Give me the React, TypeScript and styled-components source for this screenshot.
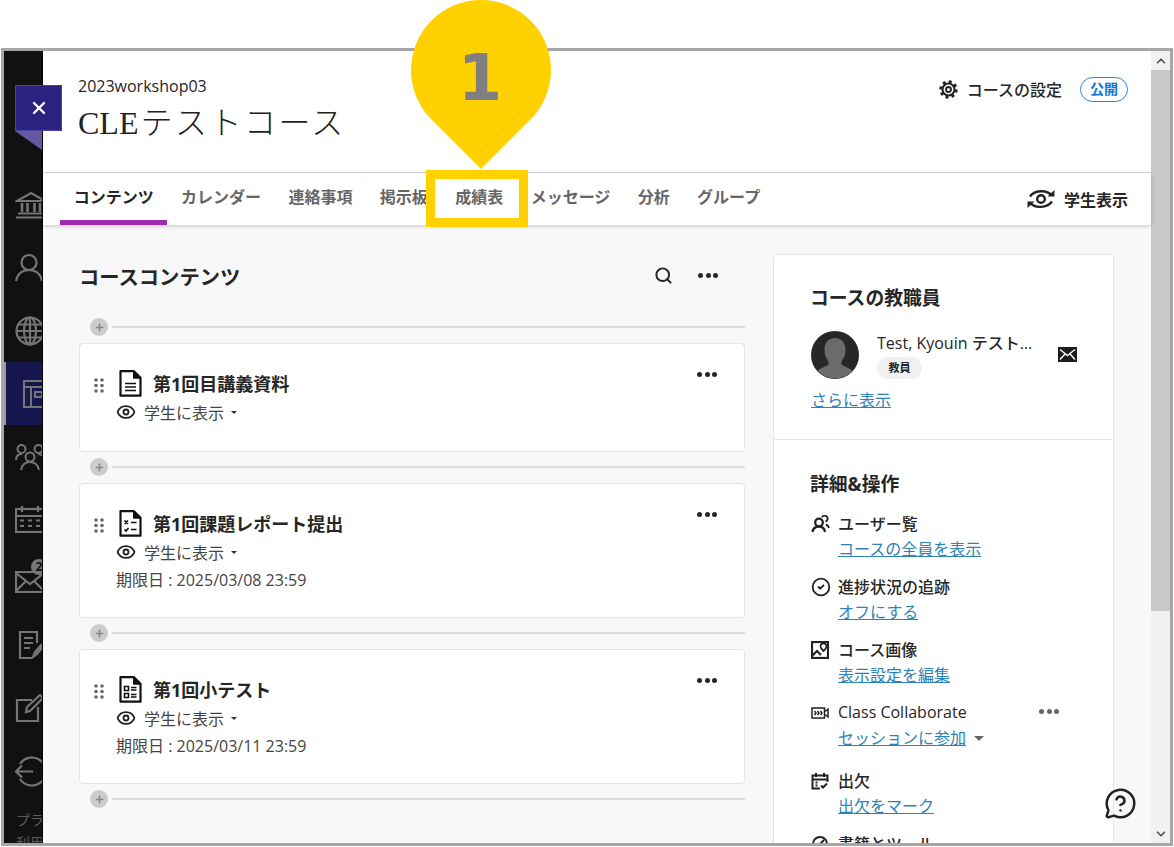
import React from 'react';
import styled, { createGlobalStyle } from 'styled-components';
import { Eye, Search, Plus, CircleCheck, MessageCircleQuestion, ChevronUp, ChevronDown, X } from 'lucide-react';

const GlobalStyle = createGlobalStyle`
  html, body { margin: 0; padding: 0; background: #fff; overflow: hidden; }
  * { box-sizing: border-box; }
  body { font-family: "Open Sans", "Noto Sans CJK JP", sans-serif; color: #262626; }
`;

const Page = styled.div`
  position: relative;
  width: 1174px;
  height: 847px;
  padding: 48px 0 0 1px;
`;
const Frame = styled.div`
  display: flex;
  width: 1172px;
  height: 798px;
  border: 3px solid #a6a6a6;
  overflow: hidden;
`;
const Sidebar = styled.nav`
  flex: 0 0 39px;
  padding-top: 123px;
  background: #111;
  border-right: 1px solid #000;
  overflow: hidden;
  color: #757575;
`;
const SideItem = styled.div<{ $active?: boolean }>`
  position: relative;
  display: flex;
  align-items: center;
  height: 62.8px;
  padding-left: ${p => (p.$active ? '17px' : '11px')};
  background: ${p => (p.$active ? '#17164f' : 'transparent')};
  border-left: ${p => (p.$active ? '2px solid #9a9a9a' : '0')};
  svg { flex: none; }
`;
const SideBadge = styled.span`
  position: absolute;
  left: 27px;
  top: 8px;
  width: 16px;
  height: 16px;
  border-radius: 50%;
  background: #777;
  color: #111;
  font-size: 12px;
  font-weight: 700;
  line-height: 16px;
  text-align: center;
`;
const SideFooter = styled.div`
  padding: 6px 0 0 12px;
  color: #5c5c5c;
  font-size: 14px;
  line-height: 23px;
  white-space: nowrap;
`;
const Main = styled.main`
  position: relative;
  flex: 1;
  display: flex;
  flex-direction: column;
  min-width: 0;
  background: #f8f8f8;
`;
const Header = styled.header`
  flex: 0 0 122px;
  display: flex;
  justify-content: space-between;
  padding: 24px 23px 0 35px;
  background: #fff;
  border-bottom: 1px solid #d9d9d9;
`;
const CourseCode = styled.div`
  font-size: 16px;
  line-height: 22px;
`;
const CourseTitle = styled.h1`
  margin: 5px 0 0;
  font-family: "Liberation Serif", "Noto Sans CJK JP", serif;
  font-size: 32px;
  font-weight: 300;
  line-height: 42px;
  color: #222;
`;
const TitleKana = styled.span`
  margin-left: 2px;
  letter-spacing: 2.5px;
`;
const HeaderRight = styled.div`
  display: flex;
  align-items: center;
  height: 28px;
`;
const SettingsText = styled.span`
  margin-left: 9px;
  font-size: 16px;
  font-weight: 500;
`;
const PublicBadge = styled.span`
  margin-left: 18px;
  width: 48px;
  height: 25px;
  border: 1.5px solid #2a84e8;
  border-radius: 13px;
  color: #1673e0;
  font-size: 14px;
  font-weight: 700;
  line-height: 22px;
  text-align: center;
`;
const TabBar = styled.div`
  position: relative;
  z-index: 1;
  flex: 0 0 52px;
  display: flex;
  align-items: stretch;
  padding: 0 23px 0 17px;
  background: #fff;
  box-shadow: 0 1px 4px rgba(0, 0, 0, 0.22);
`;
const Tab = styled.div<{ $active?: boolean }>`
  display: flex;
  align-items: center;
  padding: 0 13.7px 2px;
  color: ${p => (p.$active ? '#262626' : '#666')};
  border-bottom: 5px solid ${p => (p.$active ? '#a02ab0' : 'transparent')};
  font-size: 16px;
  font-weight: 700;
  white-space: nowrap;
`;
const StudentView = styled.div`
  margin-left: auto;
  display: flex;
  align-items: center;
  gap: 8px;
  font-size: 16px;
  font-weight: 700;
`;
const Body = styled.div`
  flex: 1;
  min-height: 0;
  display: flex;
  gap: 28px;
  padding: 29px 0 0 36px;
`;
const Column = styled.section`
  flex: 0 0 666px;
`;
const ColumnHead = styled.div`
  display: flex;
  align-items: center;
  height: 43px;
  margin-bottom: 21px;
  padding-right: 27px;
`;
const ColumnTitle = styled.h2`
  flex: 1;
  margin: 0;
  font-size: 20.3px;
  font-weight: 700;
`;
const HeadTools = styled.div`
  display: flex;
  align-items: center;
  gap: 25px;
`;
const AddRow = styled.div`
  display: flex;
  align-items: center;
  gap: 4px;
  height: 18px;
  margin: 6px 0 7px 11px;
  &::after {
    content: "";
    flex: 1;
    height: 2px;
    background: #ddd;
  }
`;
const AddButton = styled.span`
  display: flex;
  align-items: center;
  justify-content: center;
  width: 18px;
  height: 18px;
  border-radius: 50%;
  background: #ccc;
  color: #888;
`;
const Card = styled.article`
  display: flex;
  align-items: flex-start;
  padding: 26px 27px 26px 14px;
  background: #fff;
  border: 1px solid #e5e5e5;
  border-radius: 4px;
`;
const Grip = styled.span`
  margin: 8px 12px 0 0;
  line-height: 0;
`;
const CardBody = styled.div`
  flex: 1;
`;
const CardMenu = styled.span`
  margin-top: 1px;
  line-height: 0;
`;
const TitleRow = styled.div`
  display: flex;
  align-items: center;
  gap: 11px;
  height: 26px;
  padding-left: 3px;
  svg { color: #111; }
`;
const CardTitle = styled.h3`
  margin: 0;
  font-size: 18px;
  font-weight: 700;
`;
const StatusRow = styled.div`
  display: flex;
  align-items: center;
  height: 26px;
  margin-top: 3px;
  color: #444;
  font-size: 16px;
  svg { margin-right: 8px; color: #222; }
`;
const Caret = styled.span<{ $big?: boolean }>`
  display: inline-block;
  margin-left: ${p => (p.$big ? '8px' : '7px')};
  border-left: ${p => (p.$big ? '5px' : '3.5px')} solid transparent;
  border-right: ${p => (p.$big ? '5px' : '3.5px')} solid transparent;
  border-top: ${p => (p.$big ? '5px solid #666' : '3.5px solid #333')};
`;
const DueRow = styled.div`
  height: 26px;
  color: #444;
  font-size: 16px;
  line-height: 30px;
`;
const More = styled.span<{ $muted?: boolean }>`
  display: inline-flex;
  gap: 2.5px;
  color: ${p => (p.$muted ? '#666' : '#262626')};
  i {
    display: block;
    width: 5px;
    height: 5px;
    border-radius: 50%;
    background: currentColor;
  }
`;
const Panel = styled.aside`
  flex: 0 0 341px;
  align-self: flex-start;
  background: #fff;
  border: 1px solid #e5e5e5;
  border-radius: 4px;
`;
const PanelSection = styled.div<{ $first?: boolean }>`
  padding: ${p => (p.$first ? '28px 36px 26px 37px' : '29px 36px 0 37px')};
  border-bottom: ${p => (p.$first ? '1px solid #e5e5e5' : '0')};
`;
const PanelTitle = styled.h2`
  margin: 0 0 0 -1px;
  font-size: 18.8px;
  font-weight: 700;
  line-height: 30px;
`;
const Person = styled.div`
  display: flex;
  align-items: center;
  margin-top: 17px;
`;
const PersonInfo = styled.div`
  width: 157px;
  margin: 0 24px 0 18px;
`;
const PersonName = styled.div`
  overflow: hidden;
  padding-top: 1px;
  font-size: 16px;
  font-weight: 500;
  line-height: 24px;
  white-space: nowrap;
  text-overflow: ellipsis;
`;
const RoleChip = styled.span`
  display: block;
  width: 45px;
  height: 22px;
  margin-top: 2px;
  border-radius: 11px;
  background: #f0f0f0;
  font-size: 11px;
  font-weight: 700;
  line-height: 22px;
  text-align: center;
`;
const PanelLink = styled.a`
  color: #2d83b5;
  font-size: 16px;
  line-height: 25px;
  text-decoration: underline;
`;
const MoreLink = styled(PanelLink)`
  display: block;
  margin-top: 9px;
`;
const Tools = styled.div`
  display: flex;
  flex-direction: column;
  gap: 12px;
  margin-top: 12px;
`;
const Tool = styled.div<{ $wide?: boolean }>`
  display: grid;
  grid-template-columns: 27px 1fr;
  margin-bottom: ${p => (p.$wide ? '5px' : '0')};
`;
const ToolIcon = styled.span`
  display: flex;
  align-items: center;
  height: 25px;
  color: #222;
`;
const ToolLabel = styled.div`
  display: flex;
  align-items: center;
  justify-content: space-between;
  height: 25px;
  padding: 0 18px 2px 0;
  font-size: 16px;
  font-weight: 500;
`;
const ToolLink = styled.div`
  display: flex;
  align-items: center;
  grid-column: 2;
  height: 25px;
  margin-top: 1px;
`;
const Scrollbar = styled.div`
  flex: 0 0 19px;
  display: flex;
  flex-direction: column;
  background: #f1f1f1;
`;
const ScrollButton = styled.div`
  flex: 0 0 19px;
  display: flex;
  align-items: center;
  justify-content: center;
  background: #f1f1f1;
  color: #555;
`;
const ScrollThumb = styled.div`
  flex: 0 0 541px;
  background: #c8c8c8;
`;
const ScrollTrack = styled.div`
  flex: 1;
`;
const CloseTag = styled.div`
  position: absolute;
  z-index: 5;
  left: 15px;
  top: 85px;
  display: flex;
  align-items: center;
  justify-content: center;
  width: 47px;
  height: 46px;
  background: #2c2280;
  border: 1px solid #4c43a3;
  color: #fff;
  &::after {
    content: "";
    position: absolute;
    left: -1px;
    top: 45px;
    width: 27px;
    height: 19px;
    background: #64589f;
    clip-path: polygon(0 0, 100% 0, 100% 100%);
  }
`;
const Help = styled.div`
  position: absolute;
  right: 14px;
  bottom: 23px;
  line-height: 0;
  color: #222;
`;
const Callout = styled.div`
  position: absolute;
  z-index: 5;
  left: 411px;
  top: 0;
  width: 140px;
  height: 170px;
  line-height: 0;
`;
const CalloutNumber = styled.span`
  position: absolute;
  left: -2px;
  right: 0;
  top: 39px;
  color: #7f7f7f;
  font-family: "DejaVu Sans", sans-serif;
  font-size: 64px;
  font-weight: 700;
  line-height: 78px;
  text-align: center;
`;
const Highlight = styled.div`
  position: absolute;
  z-index: 5;
  left: 426px;
  top: 170px;
  width: 102px;
  height: 57px;
  border: 9px solid #ffd100;
`;

const ic = { fill: 'none', stroke: 'currentColor', strokeWidth: 2 } as const;

const DocFrame = ({ children }: { children: React.ReactNode }) => (
  <svg width="23" height="27" viewBox="0 0 23 27" {...ic} strokeWidth="2.2">
    <path d="M1.5 1.2h13.5l6.5 6.5v18H1.5z" strokeLinejoin="round" />
    <path d="M14.500 1.200v7h7z" fill="currentColor" strokeWidth="1" />
    {children}
  </svg>
);
const DocIcon = () => (
  <DocFrame>
    <path d="M6 13.500h11M6 17h11M6 20.500h11" strokeWidth="1.700" />
  </DocFrame>
);
const TaskIcon = () => (
  <DocFrame>
    <path d="M5.500 10.500l3.500 3.500M9 10.500l-3.500 3.500M5.500 19.500l1.500 1.500 2.500-3M12 12.500h5.500M12 19.500h5.500" strokeWidth="1.700" />
  </DocFrame>
);
const TestIcon = () => (
  <DocFrame>
    <path d="M5.500 10.500h4v4h-4zM5.500 17.500h4v4h-4zM12 11.500h5.500M12 14h5.500M12 18.500h5.500M12 21h5.500" strokeWidth="1.600" />
  </DocFrame>
);
const GripDots = () => (
  <svg width="10" height="15" viewBox="0 0 10 15" fill="#666">
    {[2, 7.5, 13].map(y => [2, 8].map(x => <circle key={`${x}-${y}`} cx={x} cy={y} r="1.800" />))}
  </svg>
);
const Dots = ({ muted }: { muted?: boolean }) => (
  <More $muted={muted}><i /><i /><i /></More>
);
const GearIcon = () => (
  <svg width="19" height="19" viewBox="0 0 20 20" fill="none" stroke="#222">
    <circle cx="10" cy="10" r="8.200" strokeWidth="3" strokeDasharray="3.100 3.340" />
    <circle cx="10" cy="10" r="6.300" strokeWidth="2.200" />
    <circle cx="10" cy="10" r="2.600" strokeWidth="2" />
  </svg>
);
const StudentViewIcon = () => (
  <svg width="30" height="24" viewBox="0 0 30 24" fill="none" stroke="#222" strokeWidth="2.400">
    <circle cx="15" cy="12" r="3.800" />
    <path d="M4 9.500C8 3.500 20 2 26 8.500" />
    <path d="M26 14.500C21 21 9 22 4 15.500" />
    <path d="M28.500 3v6.500h-7z" fill="#222" stroke="none" />
    <path d="M1.500 21v-6.500h7z" fill="#222" stroke="none" />
  </svg>
);
const MailFilled = () => (
  <svg width="19" height="15" viewBox="0 0 19 15">
    <rect width="19" height="15" fill="#1c1c1c" />
    <path d="M2 2.500l7.500 6 7.500-6M2 12.500l5-5.500M17 12.500l-5-5.500" fill="none" stroke="#fff" strokeWidth="1.400" />
  </svg>
);
const Avatar = () => (
  <svg width="48" height="48" viewBox="0 0 48 48">
    <circle cx="24" cy="24" r="24" fill="#272727" />
    <path d="M24 7c7 0 10.500 5 10.500 12 0 5-2 9-4 11.500v3c2 2 8 3 11 6.500A24 24 0 0 1 6.500 40c3-3.500 9-4.500 11-6.500v-3c-2-2.500-4-6.500-4-11.500C13.500 12 17 7 24 7z" fill="#6b6b6b" />
  </svg>
);
const UserListIcon = () => (
  <svg width="19" height="18" viewBox="0 0 19 18" {...ic} strokeWidth="2.300">
    <circle cx="8" cy="7.500" r="3.800" />
    <path d="M1.500 17c.5-3.800 3-5.500 6.500-5.500s5.500 1.700 6 5.500" />
    <path d="M11 2.200a3 3 0 1 1 3.500 4.300M15 9.500c1.500.6 2.500 1.800 3 3.500" strokeWidth="1.900" />
  </svg>
);
const ImageIcon = () => (
  <svg width="18" height="18" viewBox="0 0 18 18" {...ic} strokeWidth="2.200">
    <rect x="1" y="1" width="16" height="16" />
    <path d="M1 15l5-5 4 4" />
    <path d="M12.500 10s-3-2.700-3-4.700a3 3 0 0 1 6 0c0 2-3 4.700-3 4.700z" strokeWidth="1.700" />
  </svg>
);
const CollabIcon = () => (
  <svg width="18" height="12" viewBox="0 0 18 12" fill="none" stroke="currentColor" strokeWidth="1.500">
    <rect x="1" y="1" width="12.500" height="10" />
    <path d="M3.500 4l1.500 2-1.500 2M6.500 4l1.500 2-1.500 2M9.500 4l1.500 2-1.500 2" />
    <path d="M14 4.500l3-2.500v8l-3-2.500" />
  </svg>
);
const AttendanceIcon = () => (
  <svg width="18" height="18" viewBox="0 0 18 18" {...ic} strokeWidth="2">
    <path d="M9 16.500H1.500v-13h15V10M1.500 7.500h15M5 1v4M13 1v4" />
    <path d="M4.500 10.500h2M4.500 13.500h2" />
    <path d="M10 13.500l2 2 4-4" />
  </svg>
);
const BookIcon = () => (
  <svg width="18" height="18" viewBox="0 0 18 18" {...ic}>
    <circle cx="9" cy="9" r="7" />
    <path d="M5 13L13 5" />
  </svg>
);
const SideBankIcon = () => (
  <svg width="32" height="28" viewBox="0 0 32 28" {...ic} strokeWidth="2.200">
    <path d="M2 10L16 2l14 8zM1 26.500h30M3 22.500h26" />
    <path d="M7 12v9M12.500 12v9M19.500 12v9M25 12v9" strokeWidth="2.600" />
  </svg>
);
const SidePersonIcon = () => (
  <svg width="32" height="30" viewBox="0 0 32 30" {...ic} strokeWidth="2.200">
    <circle cx="14" cy="9.500" r="7.500" />
    <path d="M1 28c1.500-7 6-11 13-11s11.500 4 13 11" />
  </svg>
);
const SideGlobeIcon = () => (
  <svg width="30" height="30" viewBox="0 0 30 30" {...ic} strokeWidth="2.200">
    <circle cx="15" cy="15" r="13.500" />
    <ellipse cx="15" cy="15" rx="6" ry="13.500" />
    <path d="M15 1.500v27M1.500 15h27M3.500 8.500h23M3.500 21.500h23" />
  </svg>
);
const SideLayoutIcon = () => (
  <svg width="30" height="28" viewBox="0 0 30 28" {...ic}>
    <rect x="1" y="1" width="28" height="26" />
    <path d="M1 7h28M8 7v20" />
    <rect x="12" y="12" width="7" height="5" />
  </svg>
);
const SideGroupIcon = () => (
  <svg width="30" height="28" viewBox="0 0 30 28" {...ic}>
    <circle cx="6.500" cy="6" r="4" /><circle cx="23.500" cy="6" r="4" /><circle cx="15" cy="14" r="4.500" />
    <path d="M1 17c0-4 2-6 6-6M29 17c0-4-2-6-6-6M6 27c1-5 4-8 9-8s8 3 9 8" />
  </svg>
);
const SideCalendarIcon = () => (
  <svg width="30" height="28" viewBox="0 0 30 28" {...ic} strokeWidth="2.200">
    <rect x="1" y="4" width="28" height="23" />
    <path d="M1 11h28M7 1v6M23 1v6M5 15.500h4M13 15.500h4M21 15.500h4M5 21h4M13 21h4M21 21h4" />
  </svg>
);
const SideMailIcon = () => (
  <svg width="30" height="22" viewBox="0 0 30 22" {...ic} strokeWidth="2.200">
    <rect x="1" y="1" width="28" height="20" />
    <path d="M1 2l14 11L29 2M1 20l10-10M29 20L19 10" />
  </svg>
);
const SideGradeIcon = () => (
  <svg width="30" height="28" viewBox="0 0 30 28" {...ic} strokeWidth="2.200">
    <path d="M22 12V1H5v26h12M9 7h9M9 12h9M9 17h6" />
    <path d="M18 26l2-5 6-7 2 2-6 7z" fill="currentColor" />
  </svg>
);
const SideEditIcon = () => (
  <svg width="30" height="28" viewBox="0 0 30 28" {...ic} strokeWidth="2.200">
    <path d="M17 6H2v21h21V13" />
    <path d="M11 18l1-5L25 1l3 3-13 13z" />
  </svg>
);
const SideExitIcon = () => (
  <svg width="30" height="32" viewBox="0 0 30 32" {...ic} strokeWidth="2.200">
    <path d="M5 9a14 14 0 1 1 0 15" />
    <path d="M1 16.500h17M7 10.500l-6 6 6 6" />
  </svg>
);

const tabs = ['コンテンツ', 'カレンダー', '連絡事項', '掲示板', '成績表', 'メッセージ', '分析', 'グループ'];

const items = [
  { title: '第1回目講義資料', icon: <DocIcon /> },
  { title: '第1回課題レポート提出', icon: <TaskIcon />, due: '2025/03/08 23:59' },
  { title: '第1回小テスト', icon: <TestIcon />, due: '2025/03/11 23:59' },
];

const AddLine = () => (
  <AddRow>
    <AddButton><Plus size={11} strokeWidth={3.5} /></AddButton>
  </AddRow>
);

const App = () => (
  <Page>
    <GlobalStyle />
    <Frame>
      <Sidebar>
        <SideItem><SideBankIcon /></SideItem>
        <SideItem><SidePersonIcon /></SideItem>
        <SideItem><SideGlobeIcon /></SideItem>
        <SideItem $active><SideLayoutIcon /></SideItem>
        <SideItem><SideGroupIcon /></SideItem>
        <SideItem><SideCalendarIcon /></SideItem>
        <SideItem><SideMailIcon /><SideBadge>2</SideBadge></SideItem>
        <SideItem><SideGradeIcon /></SideItem>
        <SideItem><SideEditIcon /></SideItem>
        <SideItem><SideExitIcon /></SideItem>
        <SideFooter>プライバシー<br />利用規約</SideFooter>
      </Sidebar>
      <Main>
        <Header>
          <div>
            <CourseCode>2023workshop03</CourseCode>
            <CourseTitle>CLE<TitleKana>テストコース</TitleKana></CourseTitle>
          </div>
          <HeaderRight>
            <GearIcon />
            <SettingsText>コースの設定</SettingsText>
            <PublicBadge>公開</PublicBadge>
          </HeaderRight>
        </Header>
        <TabBar>
          {tabs.map((t, i) => <Tab key={t} $active={i === 0}>{t}</Tab>)}
          <StudentView><StudentViewIcon />学生表示</StudentView>
        </TabBar>
        <Body>
          <Column>
            <ColumnHead>
              <ColumnTitle>コースコンテンツ</ColumnTitle>
              <HeadTools>
                <Search size={19} strokeWidth={2.5} />
                <Dots />
              </HeadTools>
            </ColumnHead>
            <AddLine />
            {items.map(item => (
              <React.Fragment key={item.title}>
                <Card>
                  <Grip><GripDots /></Grip>
                  <CardBody>
                    <TitleRow>{item.icon}<CardTitle>{item.title}</CardTitle></TitleRow>
                    <StatusRow><Eye size={20} strokeWidth={2.2} />学生に表示<Caret /></StatusRow>
                    {item.due && <DueRow>期限日 : {item.due}</DueRow>}
                  </CardBody>
                  <CardMenu><Dots /></CardMenu>
                </Card>
                <AddLine />
              </React.Fragment>
            ))}
          </Column>
          <Panel>
            <PanelSection $first>
              <PanelTitle>コースの教職員</PanelTitle>
              <Person>
                <Avatar />
                <PersonInfo>
                  <PersonName>Test, Kyouin テストテスト教員</PersonName>
                  <RoleChip>教員</RoleChip>
                </PersonInfo>
                <MailFilled />
              </Person>
              <MoreLink>さらに表示</MoreLink>
            </PanelSection>
            <PanelSection>
              <PanelTitle>詳細&amp;操作</PanelTitle>
              <Tools>
                <Tool>
                  <ToolIcon><UserListIcon /></ToolIcon>
                  <ToolLabel>ユーザー覧</ToolLabel>
                  <ToolLink><PanelLink>コースの全員を表示</PanelLink></ToolLink>
                </Tool>
                <Tool>
                  <ToolIcon><CircleCheck size={20} strokeWidth={2.2} /></ToolIcon>
                  <ToolLabel>進捗状況の追跡</ToolLabel>
                  <ToolLink><PanelLink>オフにする</PanelLink></ToolLink>
                </Tool>
                <Tool>
                  <ToolIcon><ImageIcon /></ToolIcon>
                  <ToolLabel>コース画像</ToolLabel>
                  <ToolLink><PanelLink>表示設定を編集</PanelLink></ToolLink>
                </Tool>
                <Tool $wide>
                  <ToolIcon><CollabIcon /></ToolIcon>
                  <ToolLabel>Class Collaborate<Dots muted /></ToolLabel>
                  <ToolLink><PanelLink>セッションに参加</PanelLink><Caret $big /></ToolLink>
                </Tool>
                <Tool>
                  <ToolIcon><AttendanceIcon /></ToolIcon>
                  <ToolLabel>出欠</ToolLabel>
                  <ToolLink><PanelLink>出欠をマーク</PanelLink></ToolLink>
                </Tool>
                <Tool>
                  <ToolIcon><BookIcon /></ToolIcon>
                  <ToolLabel>書籍とツール</ToolLabel>
                </Tool>
              </Tools>
            </PanelSection>
          </Panel>
        </Body>
        <Help><MessageCircleQuestion size={33} strokeWidth={1.8} /></Help>
      </Main>
      <Scrollbar>
        <ScrollButton><ChevronUp size={14} strokeWidth={3} /></ScrollButton>
        <ScrollThumb />
        <ScrollTrack />
        <ScrollButton><ChevronDown size={14} strokeWidth={3} /></ScrollButton>
      </Scrollbar>
    </Frame>
    <CloseTag><X size={20} strokeWidth={2.8} /></CloseTag>
    <Callout>
      <svg width="140" height="170" viewBox="0 0 140 170">
        <path d="M70 169L20.500 119.500A70 70 0 1 1 119.500 119.500Z" fill="#ffd100" />
      </svg>
      <CalloutNumber>1</CalloutNumber>
    </Callout>
    <Highlight />
  </Page>
);

export default App;
